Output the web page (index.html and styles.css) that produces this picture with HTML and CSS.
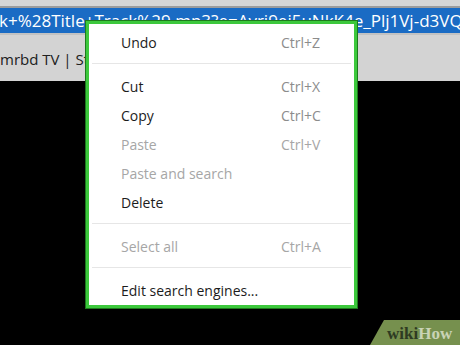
FILE: index.html
```html
<!DOCTYPE html>
<html lang="en">
<head>
    <meta charset="UTF-8">
    <meta name="viewport" content="width=device-width, initial-scale=1.0">
    <title>Context menu - Edit search engines</title>
    <link rel="stylesheet" href="styles.css">
</head>
<body>
    <div class="browser">
        <div class="top-strip"></div>
        <div class="url-bar">
            <span class="url-text">k+%28Title+Track%29.mp3?e=Avri9ei5uNkK4e_Plj1Vj-d3VQI</span>
        </div>
        <div class="bookmarks">
            <span class="bookmark-text">mrbd TV | Streaming</span>
        </div>
        <div class="page-content"></div>
    </div>

    <ul class="context-menu">
        <li class="menu-item"><span>Undo</span><span class="shortcut">Ctrl+Z</span></li>
        <li class="separator"></li>
        <li class="menu-item"><span>Cut</span><span class="shortcut">Ctrl+X</span></li>
        <li class="menu-item"><span>Copy</span><span class="shortcut">Ctrl+C</span></li>
        <li class="menu-item disabled"><span>Paste</span><span class="shortcut">Ctrl+V</span></li>
        <li class="menu-item disabled"><span>Paste and search</span></li>
        <li class="menu-item"><span>Delete</span></li>
        <li class="separator"></li>
        <li class="menu-item disabled"><span>Select all</span><span class="shortcut">Ctrl+A</span></li>
        <li class="separator"></li>
        <li class="menu-item"><span>Edit search engines...</span></li>
    </ul>

    <div class="wikihow-badge">
        <span class="wiki">wiki</span><span class="how">How</span>
    </div>
</body>
</html>
```

FILE: styles.css
```css
body {
    margin: 0;
    width: 460px;
    height: 345px;
    overflow: hidden;
    background: #000000;
    font-family: 'Open Sans', 'Noto Sans', sans-serif;
    position: relative;
}
.browser {
    display: flex;
    flex-direction: column;
    height: 100%;
}
.top-strip {
    height: 6px;
    background: #d6d6d6;
    border-bottom: 2px solid #9c9c9c;
}
.url-bar {
    height: 25px;
    background: #1a6bc4;
    color: #ffffff;
    font-size: 17px;
    line-height: 25px;
    white-space: nowrap;
    overflow: hidden;
}
.url-text {
    display: block;
    margin-left: -1px;
}
.bookmarks {
    height: 44px;
    padding-top: 2px;
    background: #d3d3d3;
    border-top: 2px solid #c2c2c2;
    display: flex;
    align-items: center;
    color: #202020;
    font-size: 15px;
    white-space: nowrap;
    overflow: hidden;
}
.page-content {
    flex: 1;
    background: #000000;
}
.context-menu {
    position: absolute;
    left: 86px;
    top: 21px;
    width: 265px;
    margin: 0;
    padding: 4px 0 0 0;
    list-style: none;
    background: #ffffff;
    border: 3px solid #3cc83c;
    box-shadow: 0 0 0 1px #1d7a1d;
}
.menu-item {
    display: flex;
    align-items: center;
    height: 29px;
    padding: 0 0 0 32px;
    font-size: 14px;
    color: #1c1c1c;
}
.menu-item.disabled {
    color: #a6a6a6;
}
.shortcut {
    margin-left: auto;
    width: 73px;
    color: #8c8c8c;
}
.menu-item.disabled .shortcut {
    color: #a6a6a6;
}
.separator {
    height: 1px;
    background: #e6e6e6;
    margin: 6px 3px 8px 3px;
}
.wikihow-badge {
    position: absolute;
    right: 0;
    bottom: 0;
    box-sizing: border-box;
    width: 90px;
    height: 25px;
    padding-left: 17px;
    background: #76904e;
    clip-path: polygon(14px 0, 100% 0, 100% 100%, 0 100%);
    font-family: 'Liberation Serif', serif;
    font-weight: bold;
    font-size: 17px;
    line-height: 27px;
    white-space: nowrap;
}
.wiki {
    color: #2e3b22;
}
.how {
    color: #c9d3b6;
}
```
